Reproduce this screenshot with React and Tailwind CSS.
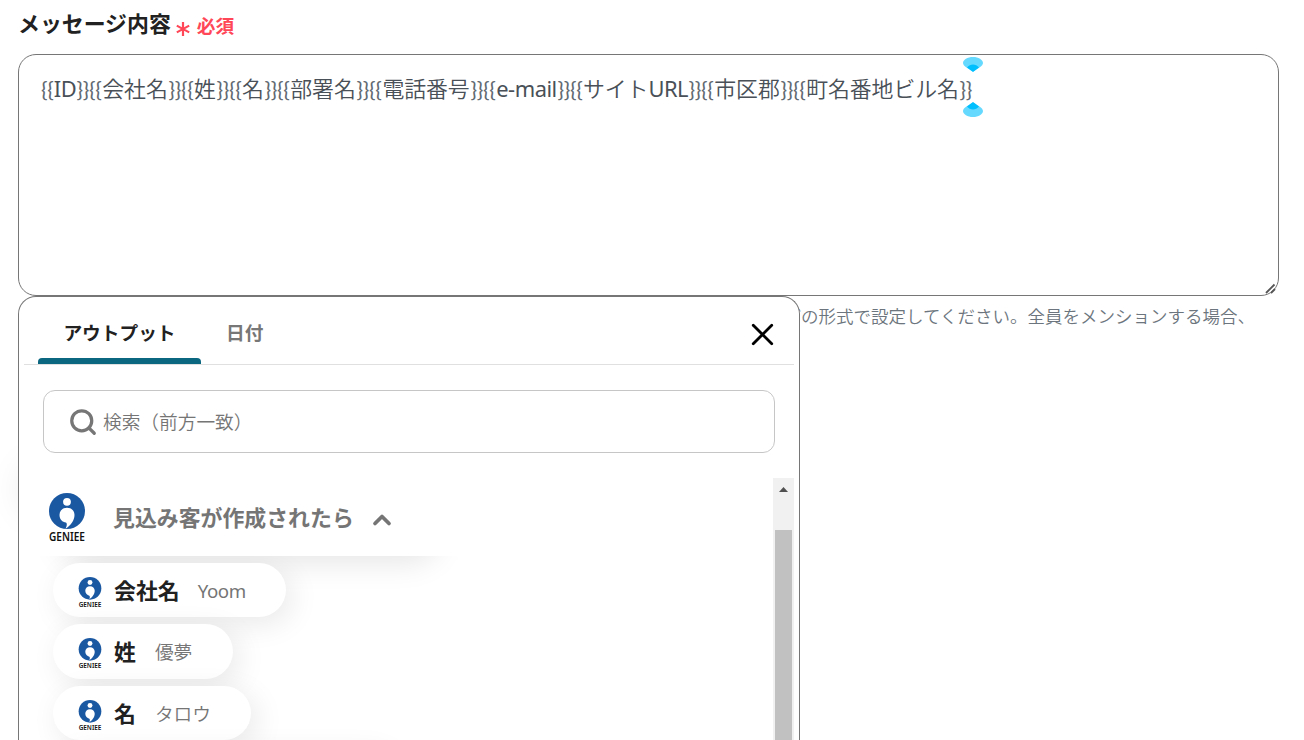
import { X, Search, ChevronUp } from 'lucide-react';

const TOKENS = [
    { latin: 'ID', width: 'w-[48px]' },
    { text: '会社名', width: 'w-[92px]' },
    { text: '姓', width: 'w-[48px]' },
    { text: '名', width: 'w-[48px]' },
    { text: '部署名', width: 'w-[92px]' },
    { text: '電話番号', width: 'w-[114px]' },
    { latin: 'e-mail', width: 'w-[87px]' },
    { text: 'サイト', latin: 'URL', width: 'w-[131px]' },
    { text: '市区郡', width: 'w-[92px]' },
    { text: '町名番地ビル名', width: 'w-[179px]' },
];

const OUTPUTS = [
    { name: '会社名', value: 'Yoom', width: 'w-[233px]', gap: 'ml-[18px]', weight: 'font-normal tracking-[-0.4px]' },
    { name: '姓', value: '優夢', width: 'w-[180px]', gap: 'ml-[19px]', weight: 'font-[350]' },
    { name: '名', value: 'タロウ', width: 'w-[198px]', gap: 'ml-[19px]', weight: 'font-[350]' },
];

const GenieeLogo = ({ className }) => (
    <svg viewBox="0 0 38 54" className={`overflow-visible ${className}`}>
        <circle cx="19" cy="18" r="18" fill="#1b58a2" />
        <circle cx="19" cy="8.800" r="3.900" fill="#fff" />
        <path d="M19 14.7C14.6 14.7 11.5 17.8 11.5 22C11.5 26.3 14.5 29.2 18 29.6C19.3 30.6 18.9 33 17.6 35.8C22.5 32.6 26.5 27.4 26.5 22C26.5 17.8 23.4 14.7 19 14.7Z" fill="#fff" />
        <text x="1" y="48" textLength="36" lengthAdjust="spacingAndGlyphs" fontFamily="Noto Sans, sans-serif" fontSize="12" fontWeight="600" fill="#111">GENIEE</text>
    </svg>
);

const MessageField = () => (
    <div className="relative h-[242px] w-[1261px] rounded-[18px] border border-[#767676] pt-[18px] pl-[22px]">
        <div className="flex h-8 items-center text-[21.9px] leading-8 whitespace-nowrap text-[#495057]">
            {TOKENS.map(token => (
                <span key={token.text || token.latin} className={`flex shrink-0 justify-between ${token.width}`}>
                    <span className="font-[Lato] tracking-[-0.3px] text-[#626a72]">{'{{'}</span>
                    <span className="font-[350] tracking-[-0.1px]">
                        {token.text}
                        {token.latin && <span className="font-normal tracking-[-0.5px]">{token.latin}</span>}
                    </span>
                    <span className="font-[Lato] tracking-[-0.3px] text-[#626a72]">{'}}'}</span>
                </span>
            ))}
        </div>
        {/* selection handles around the caret */}
        <svg viewBox="0 0 20 60" className="absolute top-[2px] left-[944px] h-[60px] w-5">
            <path d="M0 6C0 2.7 4.5 0 10 0S20 2.7 20 6C20 9 15 11.500 10 14.500C5 11.500 0 9 0 6Z" fill="#66d9ff" />
            <path d="M4 10.500C7 6.500 13 6.500 16 10.500L10 15Z" fill="#00bfff" />
            <path d="M0 54C0 57.300 4.500 60 10 60S20 57.300 20 54C20 51 15 48.500 10 45.500C5 48.500 0 51 0 54Z" fill="#66d9ff" />
            <path d="M4 49.500C7 53.500 13 53.500 16 49.500L10 45Z" fill="#00bfff" />
        </svg>
        <svg viewBox="0 0 12 12" className="absolute right-px bottom-0 h-3 w-3" fill="none" stroke="#555" strokeWidth="1.8">
            <path d="M1 10L9.500 1.500M6 10L10 6" />
        </svg>
    </div>
);

const OutputPanel = () => (
    <div className="absolute top-0 left-0 h-[460px] w-[782px] overflow-hidden rounded-t-[18px] border border-b-0 border-[#767676] bg-white">
        <div className="mx-[5px] flex h-[68px] border-b border-[#e0e0e0] pr-[19px] pl-[14px] text-[18.7px] font-bold">
            <div className="flex w-[163px] flex-col">
                <span className="flex h-[61px] items-center justify-center pt-[11px] text-[#212121]">アウトプット</span>
                <span className="h-[6px] rounded-t-[4px] bg-[#0b6780]" />
            </div>
            <span className="flex h-[61px] items-center pt-[11px] pl-[25px] text-[#777]">日付</span>
            <X className="mt-[19px] -mr-[6px] ml-auto h-[37px] w-[37px] text-black" strokeWidth={1.8} />
        </div>

        <div className="mt-[25px] ml-6 flex h-[63px] w-[732px] items-center rounded-xl border border-[#c6c6c6] pl-[24px]">
            <Search className="h-[30px] w-[30px] shrink-0 text-[#767676]" strokeWidth={2.6} />
            <span className="mt-px ml-[5px] text-[18.7px] font-[350] text-[#757575]">検索（前方一致）</span>
        </div>

        <div className="mt-[25px] flex">
            <div className="w-[754px] shrink-0">
                <div className="relative z-10 flex h-[78px] items-center bg-white pl-[29.400px]">
                    <GenieeLogo className="mt-[5px] h-[54px] w-[38px]" />
                    <span className="mt-[3px] ml-[26.600px] text-[21.9px] font-bold text-[#757575]">見込み客が作成されたら</span>
                    <ChevronUp className="mt-[6px] ml-[14px] h-7 w-7 text-[#757575]" strokeWidth={3.2} />
                </div>
                <div className="relative overflow-hidden pl-[34px]">
                    <div className="absolute -top-[60px] left-[34px] h-[60px] w-[382px] rounded-full shadow-[5px_7px_30px_rgba(0,0,0,0.1)]" />
                    <div className="flex flex-col gap-[7px] pt-[6.500px]">
                        {OUTPUTS.map(item => (
                            <div
                                key={item.name}
                                className={`relative flex h-[54.500px] items-center rounded-full bg-white pl-[25px] shadow-[6px_7px_30px_rgba(0,0,0,0.09)] ${item.width}`}
                            >
                                <GenieeLogo className="mt-[8px] h-[34px] w-[24px]" />
                                <span className="mt-[3px] ml-[12px] text-[21.9px] font-bold text-[#212121]">{item.name}</span>
                                <span className={`mt-[2px] text-[18.7px] text-[#757575] ${item.weight} ${item.gap}`}>{item.value}</span>
                            </div>
                        ))}
                        <div className="relative h-[54px] w-[340px] rounded-full bg-white shadow-[6px_7px_30px_rgba(0,0,0,0.09)]" />
                    </div>
                </div>
            </div>
            <div className="flex h-[262px] w-[21px] shrink-0 flex-col items-center bg-[#f1f1f1]">
                <svg viewBox="0 0 9 5" className="mt-[9px] h-[5px] w-[9px]" fill="#505050">
                    <path d="M4.500 0L9 5H0Z" />
                </svg>
                <div className="mt-[38px] w-[17px] flex-1 bg-[#c1c1c1]" />
            </div>
        </div>
    </div>
);

export default function App() {
    return (
        <div className="h-[740px] w-[1304px] overflow-hidden bg-white pl-[18px] font-['Noto_Sans','Noto_Sans_CJK_JP',sans-serif]">
            <div className="flex h-[54px] items-center pb-[5px]">
                <span className="text-[21.9px] font-bold text-[#212121]">メッセージ内容</span>
                <svg viewBox="0 0 14 14" className="mt-[8px] ml-[5px] h-[14px] w-[14px]" fill="none" stroke="#ff4757" strokeWidth="2.2">
                    <path d="M7 0V14M0.800 3.600L13.200 10.400M13.200 3.600L0.800 10.400" />
                </svg>
                <span className="mt-[3px] ml-[7px] text-[18.7px] font-bold text-[#ff4757]">必須</span>
            </div>
            <MessageField />
            <div className="relative h-[444px]">
                <div className="absolute top-[168px] left-[4px] h-[50px] w-[200px] rounded-full shadow-[0_0_36px_rgba(0,0,0,0.1)]" />
                <p className="flex h-[40px] w-[1237px] items-center justify-end text-[17.5px] font-[350] whitespace-nowrap text-[#6c757d]">
                    などの形式で設定してください。全員をメンションする場合、
                </p>
                <OutputPanel />
            </div>
        </div>
    );
}
